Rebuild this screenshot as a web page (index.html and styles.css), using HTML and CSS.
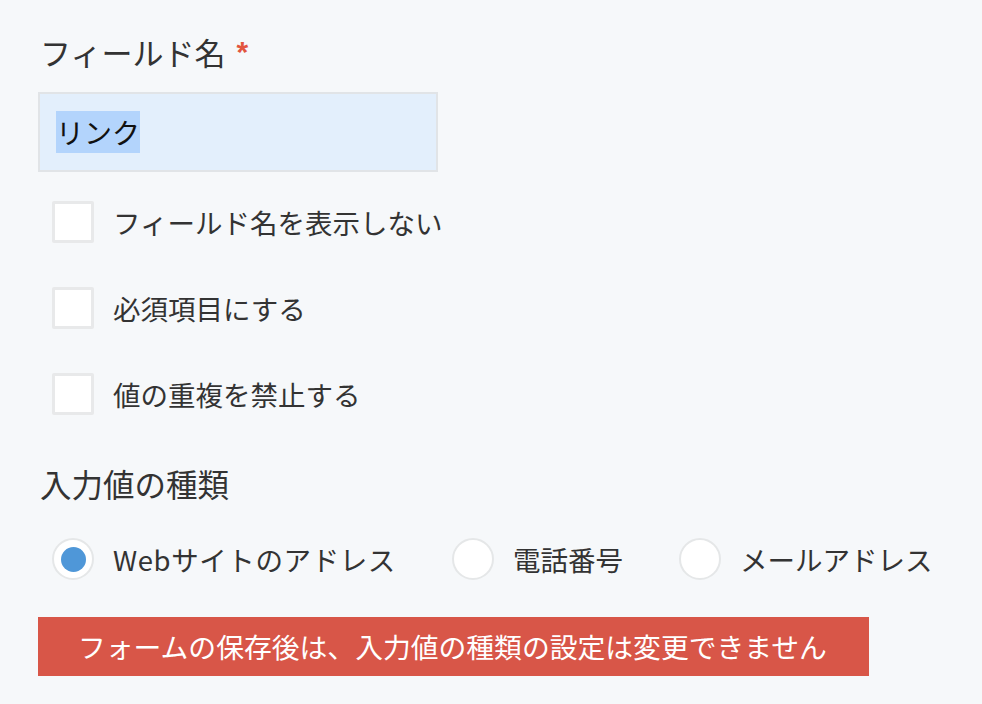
FILE: index.html
```html
<!DOCTYPE html>
<html lang="ja">
<head>
<meta charset="utf-8">
<title>フィールド設定</title>
<link rel="stylesheet" href="styles.css">
</head>
<body>
<div class="panel">
  <div class="field-label">フィールド名<span class="req">*</span></div>
  <div class="text-input"><span class="sel">リンク</span></div>

  <ul class="checks">
    <li class="check-row"><span class="checkbox"></span><span class="opt">フィールド名を表示しない</span></li>
    <li class="check-row"><span class="checkbox"></span><span class="opt">必須項目にする</span></li>
    <li class="check-row"><span class="checkbox"></span><span class="opt">値の重複を禁止する</span></li>
  </ul>

  <div class="section-label">入力値の種類</div>
  <div class="radios">
    <div class="radio-item"><span class="radio checked"></span><span class="opt wide">Webサイトのアドレス</span></div>
    <div class="radio-item"><span class="radio"></span><span class="opt">電話番号</span></div>
    <div class="radio-item"><span class="radio"></span><span class="opt">メールアドレス</span></div>
  </div>

  <div class="notice">フォームの保存後は、入力値の種類の設定は変更できません</div>
</div>
</body>
</html>
```

FILE: styles.css
```css
html, body {
  margin: 0;
  padding: 0;
  background: #f6f8fa;
}
body {
  font-family: "Noto Sans CJK JP", "Noto Sans", sans-serif;
  color: #333333;
}
.panel {
  padding: 29px 0 0 38px;
  width: 900px;
}
.field-label {
  font-size: 31px;
  line-height: 46px;
  padding-left: 2px;
  display: flex;
  align-items: flex-start;
}
.req {
  color: #e2553f;
  font-family: "Liberation Sans", Arial, sans-serif;
  font-weight: bold;
  font-size: 30px;
  margin-left: 11px;
  line-height: 46px;
}
.text-input {
  margin-top: 17px;
  box-sizing: border-box;
  width: 400px;
  height: 80px;
  border: 2px solid #e1e4e7;
  background: #e3effc;
  padding: 17px 16px;
  font-size: 28px;
  line-height: 42px;
  color: #111;
}
.sel {
  background: #b3d4fc;
  display: inline-block;
}
.checks {
  list-style: none;
  margin: 29px 0 0 14px;
  padding: 0;
  display: flex;
  flex-direction: column;
  gap: 44px;
}
.check-row {
  display: flex;
  align-items: center;
  height: 42px;
}
.checkbox {
  box-sizing: border-box;
  width: 42px;
  height: 42px;
  background: #fff;
  border: 3px solid #e8e9ea;
  border-radius: 2px;
  flex: none;
}
.opt {
  font-size: 27.5px;
  margin-left: 19px;
  line-height: 40px;
  white-space: nowrap;
}
.opt.wide {
  letter-spacing: 0.6px;
}
.section-label {
  margin-top: 45px;
  font-size: 31.5px;
  line-height: 46px;
  padding-left: 2px;
}
.radios {
  display: flex;
  margin: 32px 0 0 14px;
  height: 42px;
  align-items: center;
}
.radio-item {
  display: flex;
  align-items: center;
  margin-right: 56px;
}
.radio {
  box-sizing: border-box;
  width: 42px;
  height: 42px;
  border-radius: 50%;
  background: #fff;
  border: 2px solid #e5e7e8;
  flex: none;
  display: flex;
  align-items: center;
  justify-content: center;
}
.radio.checked::after {
  content: "";
  width: 25px;
  height: 25px;
  border-radius: 50%;
  background: #4f97d8;
}
.notice {
  margin-top: 37px;
  width: 831px;
  box-sizing: border-box;
  height: 59px;
  background: #d85648;
  color: #fff;
  font-size: 27.8px;
  line-height: 59px;
  padding-left: 40px;
  white-space: nowrap;
}
```
